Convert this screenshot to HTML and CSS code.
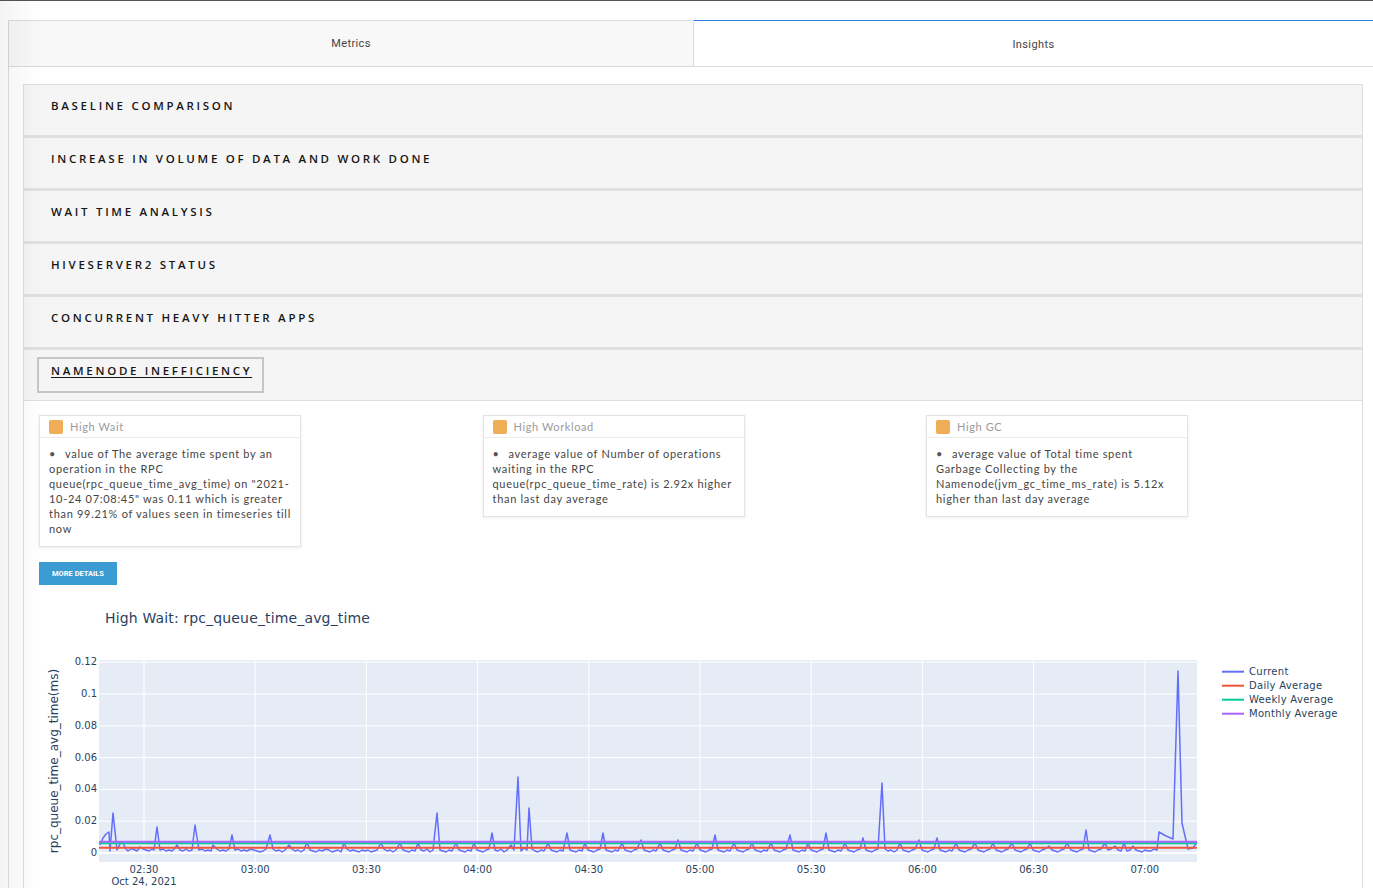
FILE: index.html
```html
<!DOCTYPE html>
<html lang="en">
<head>
<meta charset="utf-8">
<title>Insights</title>
<link rel="stylesheet" href="styles.css">
</head>
<body>
<div class="topline"></div>
<div class="shade"></div>
<main class="page">
  <nav class="tabs">
    <div class="tab">Metrics</div>
    <div class="tab tab-active">Insights</div>
  </nav>
  <section class="panel">
    <div class="accordion">
      <div class="acc-head"><span class="acc-btn">Baseline Comparison</span></div>
      <div class="acc-head"><span class="acc-btn">Increase in volume of data and work done</span></div>
      <div class="acc-head"><span class="acc-btn">Wait time analysis</span></div>
      <div class="acc-head"><span class="acc-btn">Hiveserver2 Status</span></div>
      <div class="acc-head"><span class="acc-btn">Concurrent Heavy Hitter Apps</span></div>
      <div class="acc-head acc-open"><span class="acc-btn acc-focus">Namenode Inefficiency</span></div>
      <div class="acc-body">
        <div class="cards">
          <div class="card">
            <div class="card-head"><span class="sq"></span><span class="card-title">High Wait</span></div>
            <div class="card-body">value of The average time spent by an operation in the RPC queue(rpc_queue_time_avg_time) on "2021-<wbr>10-24 07:08:45" was 0.11 which is greater than 99.21% of values seen in timeseries till now</div>
          </div>
          <div class="card">
            <div class="card-head"><span class="sq"></span><span class="card-title">High Workload</span></div>
            <div class="card-body">average value of Number of operations waiting in the RPC queue(rpc_queue_time_rate) is 2.92x higher than last day average</div>
          </div>
          <div class="card">
            <div class="card-head"><span class="sq"></span><span class="card-title">High GC</span></div>
            <div class="card-body">average value of Total time spent Garbage Collecting by the Namenode(jvm_gc_time_ms_rate) is 5.12x higher than last day average</div>
          </div>
        </div>
        <div class="actions"><button class="more-btn">More details</button></div>
        <svg class="chart" width="1338" height="300" viewBox="0 0 1338 300">
          <g transform="translate(-24 -600)">
            <text class="ch-title" x="105" y="623">High Wait: rpc_queue_time_avg_time</text>
            <rect x="99" y="660" width="1098" height="202" fill="#e5ecf6"/>
            <g class="grid">
              <line x1="99" x2="1197" y1="662.2" y2="662.2"/>
              <line x1="99" x2="1197" y1="694" y2="694"/>
              <line x1="99" x2="1197" y1="725.8" y2="725.8"/>
              <line x1="99" x2="1197" y1="757.6" y2="757.6"/>
              <line x1="99" x2="1197" y1="789.4" y2="789.4"/>
              <line x1="99" x2="1197" y1="821.2" y2="821.2"/>
              <line x1="144" x2="144" y1="660" y2="862"/>
              <line x1="255.2" x2="255.2" y1="660" y2="862"/>
              <line x1="366.4" x2="366.4" y1="660" y2="862"/>
              <line x1="477.6" x2="477.6" y1="660" y2="862"/>
              <line x1="588.8" x2="588.8" y1="660" y2="862"/>
              <line x1="700" x2="700" y1="660" y2="862"/>
              <line x1="811.2" x2="811.2" y1="660" y2="862"/>
              <line x1="922.4" x2="922.4" y1="660" y2="862"/>
              <line x1="1033.6" x2="1033.6" y1="660" y2="862"/>
              <line x1="1144.8" x2="1144.8" y1="660" y2="862"/>
            </g>
            <line class="zero" x1="99" x2="1197" y1="853" y2="853"/>
            <polyline class="s-current" points="100,845 103,838 106,834 109,832 110,851 113,813 117,850 121,842 123,843 126,849 128,851 131,849 133,849 137,851 140,847 143,849 146,850 149,851 152,849 154,850 157,827 160,850 163,849 166,851 169,850 172,851 175,848 177,845 180,850 183,851 186,849 189,851 192,850 195,825 199,850 202,849 205,851 208,850 211,851 213,845 217,849 220,851 223,850 226,851 229,849 232,835 235,850 238,849 241,851 244,850 247,851 251,849 254,850 257,851 260,852 263,851 266,849 270,835 273,849 276,851 279,850 282,852 285,850 289,845 292,849 295,851 298,850 301,852 304,850 307,842 310,850 313,851 316,852 319,850 322,851 326,849 329,850 332,852 335,851 338,850 341,852 344,843 347,849 350,851 353,850 356,851 359,852 362,850 365,851 368,850 371,852 374,851 377,850 381,843 384,849 387,851 390,850 393,852 396,850 400,843 403,850 406,851 409,852 412,850 415,851 418,843 421,850 424,851 427,849 430,852 433,850 437,813 440,850 443,851 446,852 449,850 452,851 456,843 459,850 462,851 465,852 468,850 471,851 474,843 477,850 480,851 483,852 486,850 489,849 492,833 495,850 498,851 501,849 504,852 507,850 511,845 514,850 518,777 521,851 524,848 527,850 529,808 532,849 535,851 538,852 541,850 544,851 548,843 551,850 554,851 557,852 560,850 563,851 567,833 570,850 573,851 576,852 579,850 582,851 585,843 588,850 591,851 594,852 597,850 600,849 603,833 606,850 609,851 612,852 615,850 618,851 622,843 625,850 628,851 631,852 634,850 637,849 641,840 644,850 647,851 650,852 653,850 656,851 660,843 663,850 666,851 669,852 672,850 675,849 678,840 681,850 684,851 687,852 690,850 693,851 697,843 700,850 703,851 706,852 709,850 712,849 715,835 718,850 721,851 724,852 727,850 730,851 734,843 737,850 740,851 743,852 746,850 749,849 752,843 755,850 758,851 761,852 764,850 767,851 771,843 774,850 777,851 780,852 783,850 786,849 790,835 793,850 796,851 799,852 802,850 805,851 808,843 811,850 814,851 817,852 820,850 823,849 826,833 829,850 832,851 835,852 838,850 841,851 845,843 848,850 851,851 854,852 857,850 860,849 863,838 866,850 869,851 872,852 875,850 878,849 882,783 885,849 888,851 891,850 894,852 897,850 900,843 903,850 906,851 909,852 912,850 915,849 919,840 922,850 925,851 928,852 931,850 934,849 937,838 940,850 943,851 946,852 949,850 952,851 956,843 959,850 962,851 965,852 968,850 971,849 975,843 978,850 981,851 984,852 987,850 990,849 993,843 996,850 999,851 1002,852 1005,850 1008,849 1012,843 1015,850 1018,851 1021,852 1024,850 1027,849 1030,843 1033,850 1036,851 1039,852 1042,850 1045,849 1049,846 1052,850 1055,851 1058,852 1061,850 1064,849 1067,843 1071,850 1074,851 1077,852 1080,850 1083,849 1086,830 1089,850 1092,851 1095,852 1098,850 1101,849 1105,843 1108,850 1111,849 1115,846 1118,850 1121,851 1124,843 1127,851 1130,850 1133,846 1136,850 1139,851 1142,852 1145,850 1148,851 1151,851 1154,849 1157,850 1159,832 1166,836 1173,839 1178,671 1182,823 1188,849 1193,848 1197,842"/>
            <line class="s-daily" x1="99" x2="1197" y1="847.7" y2="847.7"/>
            <line class="s-weekly" x1="99" x2="1197" y1="843.3" y2="843.3"/>
            <line class="s-monthly" x1="99" x2="1197" y1="841.7" y2="841.7"/>
            <g class="ytick">
              <text x="97" y="665.2">0.12</text>
              <text x="97" y="697">0.1</text>
              <text x="97" y="728.8">0.08</text>
              <text x="97" y="760.6">0.06</text>
              <text x="97" y="792.4">0.04</text>
              <text x="97" y="824.2">0.02</text>
              <text x="97" y="856">0</text>
            </g>
            <g class="xtick">
              <text x="144" y="872.5">02:30</text>
              <text x="144" y="884.5">Oct 24, 2021</text>
              <text x="255.2" y="872.5">03:00</text>
              <text x="366.4" y="872.5">03:30</text>
              <text x="477.6" y="872.5">04:00</text>
              <text x="588.8" y="872.5">04:30</text>
              <text x="700" y="872.5">05:00</text>
              <text x="811.2" y="872.5">05:30</text>
              <text x="922.4" y="872.5">06:00</text>
              <text x="1033.6" y="872.5">06:30</text>
              <text x="1144.8" y="872.5">07:00</text>
            </g>
            <text class="ytitle" x="58" y="761" transform="rotate(-90 58 761)">rpc_queue_time_avg_time(ms)</text>
            <g class="legend">
              <line class="lg-current" x1="1222" x2="1244" y1="671.7" y2="671.7"/>
              <text x="1249" y="675.2">Current</text>
              <line class="lg-daily" x1="1222" x2="1244" y1="685.7" y2="685.7"/>
              <text x="1249" y="689.2">Daily Average</text>
              <line class="lg-weekly" x1="1222" x2="1244" y1="699.7" y2="699.7"/>
              <text x="1249" y="703.2">Weekly Average</text>
              <line class="lg-monthly" x1="1222" x2="1244" y1="713.7" y2="713.7"/>
              <text x="1249" y="717.2">Monthly Average</text>
            </g>
          </g>
        </svg>
      </div>
    </div>
  </section>
</main>
</body>
</html>
```

FILE: styles.css
```css
* { box-sizing: border-box; }

html, body {
  margin: 0;
  padding: 0;
  background: #ffffff;
  font-family: "Lato", "Open Sans", sans-serif;
  overflow: hidden;
}

.topline {
  height: 1px;
  background: #555555;
}

.shade {
  position: fixed;
  left: 0;
  top: 0;
  bottom: 0;
  width: 42px;
  background: linear-gradient(to right, rgba(0, 0, 0, 0.045), rgba(0, 0, 0, 0));
  pointer-events: none;
  z-index: 5;
}

.page {
  padding: 19px 0 0 8px;
}

.tabs {
  display: flex;
  height: 47px;
}

.tab {
  display: flex;
  align-items: center;
  justify-content: center;
  font-family: "Roboto", "Liberation Sans", sans-serif;
  font-size: 11px;
  letter-spacing: 0.4px;
  color: #444444;
}

.tab:first-child {
  width: 686px;
  background: #f8f8f8;
  border: 1px solid #dadada;
}

.tab-active {
  flex: 1;
  background: #ffffff;
  border-top: 1px solid #2a7ae4;
  border-bottom: 1px solid #dddddd;
  padding-top: 2px;
}

.panel {
  border-left: 1px solid #dddddd;
  padding: 17px 10px 0 14px;
}

.accordion {
  border: 1px solid #dddddd;
  border-bottom: none;
}

.acc-head {
  background: #f5f5f5;
  padding: 7px 13px;
  border-bottom: 3px solid #e0e0e0;
}

.acc-head.acc-open {
  border-bottom: 1px solid #dddddd;
}

.acc-btn {
  display: inline-block;
  border: 2px solid transparent;
  padding: 4px 10px 12px 12px;
  line-height: 16px;
  font-family: "Open Sans", "Lato", sans-serif;
  font-weight: 600;
  font-size: 11.5px;
  letter-spacing: 2.7px;
  text-transform: uppercase;
  color: #161616;
}

.acc-focus {
  border-color: #c6c6c6;
  text-decoration: underline;
  text-underline-offset: 2px;
}

.acc-body {
  background: #ffffff;
  padding-top: 14px;
}

.cards {
  display: grid;
  grid-template-columns: repeat(3, 262px);
  column-gap: 181.5px;
  align-items: start;
  padding-left: 15px;
}

.card {
  background: #ffffff;
  border: 1px solid #e4e4e4;
  box-shadow: 0 1px 3px rgba(0, 0, 0, 0.08);
}

.card-head {
  height: 22px;
  display: flex;
  align-items: center;
  gap: 7px;
  padding: 0 9px;
  border-bottom: 1px solid #ececec;
}

.sq {
  width: 14px;
  height: 14px;
  border-radius: 2px;
  background: #efad57;
}

.card-title {
  font-size: 11px;
  letter-spacing: 0.6px;
  color: #9b9b9b;
}

.card-body {
  padding: 8px 9px 10px;
  font-size: 11px;
  line-height: 15px;
  letter-spacing: 0.7px;
  color: #454545;
}

.card-body::before {
  content: "•";
  display: inline-block;
  width: 13px;
  margin-right: 3px;
  color: #555555;
}

.actions {
  padding: 15px 0 0 15px;
}

.more-btn {
  display: block;
  width: 78px;
  height: 23px;
  padding: 0;
  border: none;
  background: #3b9cd3;
  color: #ffffff;
  font-family: "Roboto", "Liberation Sans", sans-serif;
  font-weight: 700;
  font-size: 7.5px;
  letter-spacing: 0;
  text-transform: uppercase;
}

.chart {
  display: block;
  margin-top: 15px;
  overflow: visible;
  font-family: "DejaVu Sans", "Liberation Sans", sans-serif;
}

.ch-title {
  font-size: 14px;
  letter-spacing: 0.15px;
  fill: #2a3f5f;
}

.grid line {
  stroke: #ffffff;
  stroke-width: 1;
}

.zero {
  stroke: #ffffff;
  stroke-width: 2;
}

.s-current {
  fill: none;
  stroke: #636efa;
  stroke-width: 1.5;
  stroke-linejoin: round;
}

.s-daily { stroke: #ef553b; stroke-width: 2; }
.s-weekly { stroke: #00cc96; stroke-width: 2; }
.s-monthly { stroke: #ab63fa; stroke-width: 2; }

.ytick text {
  font-size: 10px;
  fill: #2a3f5f;
  text-anchor: end;
}

.xtick text {
  font-size: 10px;
  fill: #2a3f5f;
  text-anchor: middle;
}

.ytitle {
  font-size: 12px;
  fill: #2a3f5f;
  text-anchor: middle;
}

.legend text {
  font-size: 10px;
  letter-spacing: 0.3px;
  fill: #2a3f5f;
}

.legend line { stroke-width: 2; }
.lg-current { stroke: #636efa; }
.lg-daily { stroke: #ef553b; }
.lg-weekly { stroke: #00cc96; }
.lg-monthly { stroke: #ab63fa; }
```
